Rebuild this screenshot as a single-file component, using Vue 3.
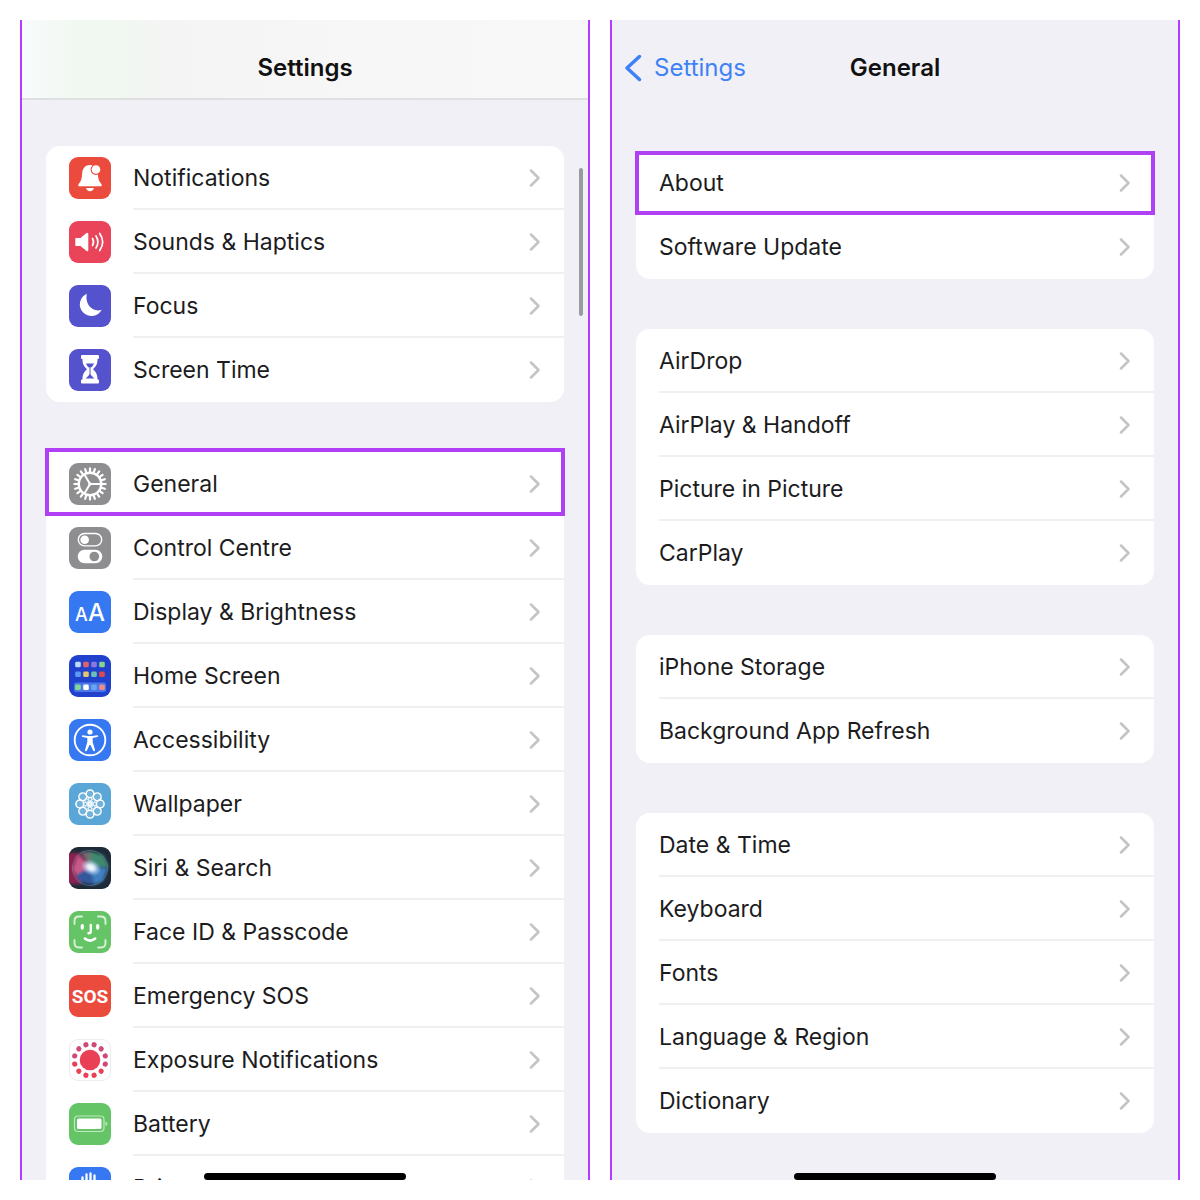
<template>
  <main class="page">
    <section class="phone">
      <header class="navbar navbar-scrolled">
        <h1 class="title">Settings</h1>
      </header>

      <div class="content">
        <nav
          v-for="(group, index) in settingsGroups"
          :key="index"
          class="card"
          :class="{ 'card-marked': group[0].marked }"
        >
          <a
            v-for="item in group"
            :key="item.name"
            href="#"
            class="row"
            :class="{ marked: item.marked }"
            @click.prevent
          >
            <svg class="icon" viewBox="0 0 42 42" aria-hidden="true">
              <rect
                v-if="item.color"
                width="42"
                height="42"
                rx="9"
                :fill="item.color"
              />

              <g v-if="item.icon === 'bell'" fill="#fff">
                <path
                  d="M21 8c-5.600 0-7.600 4.200-7.900 9-.2 4.500-.8 7-3.700 10.200V29.200h23.200v-2c-2.900-3.200-3.500-5.700-3.700-10.200-.3-4.800-2.300-9-7.900-9z"
                />
                <path d="M17 31h8c-.5 2-2 3.200-4 3.200S17.500 33 17 31z" />
                <circle cx="27" cy="12.500" r="5.400" :fill="item.color" />
                <circle cx="27" cy="12.500" r="4.300" />
              </g>

              <g v-else-if="item.icon === 'speaker'">
                <path
                  d="M7 17h4.500l6-5q1.800-1 1.800 1v16q0 2-1.800 1l-6-5H7q-.7 0-.7-.8v-6.400q0-.8.7-.8z"
                  fill="#fff"
                />
                <g
                  fill="none"
                  stroke="#fff"
                  stroke-width="1.700"
                  stroke-linecap="round"
                >
                  <path d="M23.500 17.500q2 3.500 0 7" />
                  <path d="M27 15q3.800 6 0 12" />
                  <path d="M30.700 12.500q6 8.500 0 17" />
                </g>
              </g>

              <path
                v-else-if="item.icon === 'moon'"
                d="M17.800 8.800A11.600 11.600 0 1 0 32.700 24.800C25 27.600 15.500 21 17.800 8.800z"
                fill="#fff"
              />

              <g v-else-if="item.icon === 'hourglass'">
                <path
                  d="M13 6h16q1 0 1 1v2q0 1-1 1h-.5c0 5-1.200 7.200-4.500 10.200 3.300 3 4.500 5.500 4.500 10.300h.5q1 0 1 1v2q0 1-1 1H13q-1 0-1-1v-2q0-1 1-1h.5c0-4.800 1.200-7.300 4.500-10.300-3.300-3-4.500-5.200-4.500-10.200H13q-1 0-1-1V7q0-1 1-1z"
                  fill="#fff"
                />
                <path
                  d="M17 14.500h8c-.7 2-1.800 3.200-3.300 4.300v7l3.600 3.700h-8.600l3.600-3.700v-7c-1.500-1.100-2.600-2.300-3.300-4.300z"
                  :fill="item.color"
                />
                <path d="M20.400 18h1.200v7h-1.200z" fill="#fff" fill-opacity="0.500" />
              </g>

              <g v-else-if="item.icon === 'gear'" fill="none" stroke="#fff">
                <circle cx="21" cy="21" r="11.300" stroke-width="2.400" />
                <path
                  v-for="n in 20"
                  :key="n"
                  d="M21 9V5.400"
                  stroke-width="2.200"
                  stroke-linecap="round"
                  :transform="`rotate(${n * 18} 21 21)`"
                />
                <path
                  d="M21 21h11M21 21l-5.700-9.800M21 21l-5.700 9.800"
                  stroke-width="2"
                />
                <circle cx="21" cy="21" r="1.200" fill="#fff" />
              </g>

              <g v-else-if="item.icon === 'toggles'">
                <rect
                  x="9.300"
                  y="6.500"
                  width="23.400"
                  height="12.400"
                  rx="6.200"
                  fill="none"
                  stroke="#fff"
                  stroke-width="1.400"
                />
                <circle cx="15.700" cy="12.700" r="4.300" fill="#fff" />
                <rect
                  x="8.700"
                  y="22.700"
                  width="24.600"
                  height="13.600"
                  rx="6.800"
                  fill="#fff"
                />
                <circle cx="25.300" cy="29.500" r="4.800" :fill="item.color" />
              </g>

              <g v-else-if="item.icon === 'text'" class="icon-letters">
                <text x="6" y="30" font-size="18">A</text>
                <text x="19" y="30" font-size="24">A</text>
              </g>

              <g v-else-if="item.icon === 'home'">
                <rect
                  x="5"
                  y="27.500"
                  width="32"
                  height="9.500"
                  rx="2"
                  fill="#4a78e8"
                />
                <rect
                  v-for="app in homeApps"
                  :key="`${app.x}-${app.y}`"
                  :x="app.x - 2.8"
                  :y="app.y - 2.8"
                  width="5.600"
                  height="5.600"
                  rx="1.400"
                  :fill="app.color"
                />
              </g>

              <g v-else-if="item.icon === 'person'">
                <circle
                  cx="21"
                  cy="21"
                  r="15.300"
                  fill="none"
                  stroke="#fff"
                  stroke-width="1.900"
                />
                <circle cx="21" cy="13" r="2.600" fill="#fff" />
                <path
                  d="M13.800 16.200l4.700.8h5l4.700-.8q1 0 1 .9 0 .800-1 1l-4.500.9V23l2.300 8q.2 1-.6 1.200-.9.200-1.300-.7L21.500 26h-1l-2.600 5.500q-.4.900-1.300.7-.8-.2-.6-1.200l2.300-8v-4l-4.500-.9q-1-.2-1-1 0-.9 1-.9z"
                  fill="#fff"
                />
              </g>

              <g
                v-else-if="item.icon === 'flower'"
                fill="#fff"
                fill-opacity="0.150"
                stroke="#fff"
                stroke-width="1.500"
              >
                <circle
                  v-for="n in 8"
                  :key="n"
                  cx="21"
                  cy="10.800"
                  r="3.900"
                  :transform="`rotate(${n * 45} 21 21)`"
                />
                <circle
                  v-for="n in 8"
                  :key="`inner-${n}`"
                  cx="21"
                  cy="16"
                  r="1.800"
                  stroke-width="0.800"
                  :transform="`rotate(${n * 45} 21 21)`"
                />
                <circle cx="21" cy="21" r="2.200" fill-opacity="0.800" />
              </g>

              <g v-else-if="item.icon === 'siri'">
                <defs>
                  <clipPath id="siri-clip">
                    <rect width="42" height="42" rx="9" />
                  </clipPath>
                  <filter id="siri-blur">
                    <feGaussianBlur stdDeviation="1.800" />
                  </filter>
                  <radialGradient id="siri-glow">
                    <stop offset="0" stop-color="#fff" />
                    <stop offset="0.350" stop-color="#e4f2ff" stop-opacity="0.900" />
                    <stop offset="1" stop-color="#a8c8f0" stop-opacity="0" />
                  </radialGradient>
                </defs>
                <g clip-path="url(#siri-clip)">
                  <rect width="42" height="42" fill="#1d2b38" />
                  <g filter="url(#siri-blur)">
                    <path d="M-4 6h15l10 14-9 17H-4z" fill="#8a2450" />
                    <path d="M21 20L9 8l-5 14 5 10z" fill="#c85a88" />
                    <path d="M21 20L20 4l14 4 6 12z" fill="#40896f" />
                    <path d="M21 20l18 1-5 13-9 4z" fill="#3f7fc0" />
                    <path d="M21 20l4 18-14-3-4-7z" fill="#32589c" />
                    <path d="M21 20L12 5h9z" fill="#7a6a72" />
                  </g>
                  <circle
                    cx="21"
                    cy="21"
                    r="17.500"
                    fill="none"
                    stroke="#7fa6c8"
                    stroke-opacity="0.400"
                  />
                  <ellipse
                    cx="22"
                    cy="20.500"
                    rx="11"
                    ry="8"
                    fill="url(#siri-glow)"
                    transform="rotate(25 22 20.500)"
                  />
                </g>
              </g>

              <g
                v-else-if="item.icon === 'face'"
                fill="none"
                stroke="#fff"
                stroke-linecap="round"
              >
                <path
                  d="M5.500 13V10q0-4.500 4.500-4.500h3M29 5.500h3q4.500 0 4.500 4.500v3M36.500 29v3q0 4.500-4.500 4.500h-3M13 36.500h-3q-4.500 0-4.500-4.500v-3"
                  stroke-width="1.900"
                  stroke-opacity="0.750"
                />
                <path d="M13.300 14.500v2.600M28.700 14.500v2.600" stroke-width="3.200" />
                <path d="M21.800 14v6.500q0 1.800-2.300 1.800" stroke-width="2.400" />
                <path d="M15.800 27.500q5.200 4.200 10.400 0" stroke-width="2.500" />
              </g>

              <text
                v-else-if="item.icon === 'sos'"
                x="21"
                y="28"
                class="icon-sos"
              >
                SOS
              </text>

              <g v-else-if="item.icon === 'exposure'" fill="#ea4055">
                <rect
                  x="0.500"
                  y="0.500"
                  width="41"
                  height="41"
                  rx="8.500"
                  fill="#fff"
                  stroke="#ededed"
                />
                <circle cx="21" cy="21" r="10.300" />
                <circle
                  v-for="n in 12"
                  :key="n"
                  cx="21"
                  cy="5.200"
                  r="2.600"
                  :fill="n > 9 || n < 5 ? '#cf4a78' : '#ea4055'"
                  :transform="`rotate(${n * 30 - 15} 21 21)`"
                />
              </g>

              <g v-else-if="item.icon === 'battery'">
                <rect
                  x="5.500"
                  y="13"
                  width="29.500"
                  height="15.500"
                  rx="3.500"
                  fill="none"
                  stroke="#fff"
                  stroke-opacity="0.600"
                  stroke-width="1.200"
                />
                <rect
                  x="8"
                  y="15.500"
                  width="24.500"
                  height="10.500"
                  rx="1.500"
                  fill="#fff"
                />
                <path
                  d="M36.500 18.500q2 .7 2 2.300t-2 2.300z"
                  fill="#fff"
                  fill-opacity="0.600"
                />
              </g>

              <g
                v-else-if="item.icon === 'hand'"
                fill="none"
                stroke="#fff"
                stroke-width="2.300"
                stroke-linecap="round"
              >
                <path d="M13.500 22V10.500M17.500 20V7.500M21.500 20V6.500M25.500 20V8.500" />
                <path
                  d="M12.400 20h14.300l4-2.500q2-.5 1.500 1.500L27 30q-2.500 5-7.500 5t-7-7z"
                  fill="#fff"
                  stroke-width="0"
                />
              </g>
            </svg>

            <span class="row-body">
              <span class="label">{{ item.name }}</span>
              <svg class="chevron" viewBox="0 0 12 18" aria-hidden="true">
                <path d="M2 1.500L9.500 9L2 16.500" />
              </svg>
            </span>
          </a>
        </nav>
      </div>

      <div class="scrollbar"></div>
      <div class="home-indicator"></div>
    </section>

    <section class="phone">
      <header class="navbar">
        <a href="#" class="back" @click.prevent>
          <svg class="back-icon" viewBox="0 0 18 28" aria-hidden="true">
            <path d="M15.500 2.500L3 14l12.500 11.500" />
          </svg>
          <span>Settings</span>
        </a>
        <h1 class="title">General</h1>
      </header>

      <div class="content content-general">
        <nav
          v-for="(group, index) in generalGroups"
          :key="index"
          class="card"
          :class="{ 'card-marked': group[0].marked }"
        >
          <a
            v-for="item in group"
            :key="item.name"
            href="#"
            class="row"
            :class="{ marked: item.marked }"
            @click.prevent
          >
            <span class="row-body">
              <span class="label">{{ item.name }}</span>
              <svg class="chevron" viewBox="0 0 12 18" aria-hidden="true">
                <path d="M2 1.500L9.500 9L2 16.500" />
              </svg>
            </span>
          </a>
        </nav>
      </div>

      <div class="home-indicator"></div>
    </section>
  </main>
</template>

<script setup>
const settingsGroups = [
  [
    { name: "Notifications", icon: "bell", color: "#eb4b3d" },
    { name: "Sounds & Haptics", icon: "speaker", color: "#ea445a" },
    { name: "Focus", icon: "moon", color: "#5452cc" },
    { name: "Screen Time", icon: "hourglass", color: "#5452cc" },
  ],
  [
    { name: "General", icon: "gear", color: "#8e8e90", marked: true },
    { name: "Control Centre", icon: "toggles", color: "#8e8e90" },
    { name: "Display & Brightness", icon: "text", color: "#3578f2" },
    { name: "Home Screen", icon: "home", color: "#1f41cc" },
    { name: "Accessibility", icon: "person", color: "#3578f2" },
    { name: "Wallpaper", icon: "flower", color: "#5aa6d6" },
    { name: "Siri & Search", icon: "siri" },
    { name: "Face ID & Passcode", icon: "face", color: "#65c466" },
    { name: "Emergency SOS", icon: "sos", color: "#eb4b3d" },
    { name: "Exposure Notifications", icon: "exposure" },
    { name: "Battery", icon: "battery", color: "#65c466" },
    { name: "Privacy & Security", icon: "hand", color: "#3578f2" },
  ],
];

const generalGroups = [
  [{ name: "About", marked: true }, { name: "Software Update" }],
  [
    { name: "AirDrop" },
    { name: "AirPlay & Handoff" },
    { name: "Picture in Picture" },
    { name: "CarPlay" },
  ],
  [{ name: "iPhone Storage" }, { name: "Background App Refresh" }],
  [
    { name: "Date & Time" },
    { name: "Keyboard" },
    { name: "Fonts" },
    { name: "Language & Region" },
    { name: "Dictionary" },
  ],
];

const columns = [9, 17, 25, 33];
const appRows = [
  { y: 9.5, colors: ["#b9dcff", "#e0606c", "#8a78e0", "#86d68c"] },
  { y: 19.3, colors: ["#5a9cf4", "#e8c468", "#6cc0b8", "#dc4a50"] },
  { y: 32.3, colors: ["#86d694", "#ffffff", "#6aa4f6", "#f08a84"] },
];
const homeApps = appRows.flatMap((row) =>
  row.colors.map((color, i) => ({ x: columns[i], y: row.y, color }))
);
</script>

<style>
body {
  margin: 0;
  background: #fff;
}
</style>

<style scoped>
.page {
  display: grid;
  grid-template-columns: 1fr 1fr;
  gap: 20px;
  padding: 20px;
  height: 100vh;
  box-sizing: border-box;
  font-family: Inter, "Liberation Sans", sans-serif;
  font-size: 24px;
  line-height: 32px;
  color: #1c1c1e;
}
.phone {
  position: relative;
  overflow: hidden;
  background: #f1f0f6;
  border: solid #b23cff;
  border-width: 0 2px;
}
.navbar {
  display: grid;
  grid-template-columns: 1fr auto 1fr;
  align-items: center;
  height: 80px;
  padding: 18px 12px 0;
  box-sizing: border-box;
  border-bottom: 2px solid transparent;
}
.navbar-scrolled {
  border-bottom-color: #dfdfe2;
  background: linear-gradient(
    90deg,
    #f8fbfc 0,
    #f1f8f1 10%,
    #f1f7f1 17%,
    #f4f4f4 25%,
    #f7f7f7 60%,
    #f8f8f8 100%
  );
}
.title {
  grid-column: 2;
  margin: 0;
  font-size: 24px;
  font-weight: 600;
  color: #111;
}
.back {
  display: flex;
  align-items: center;
  gap: 12px;
  color: #3f82f7;
  text-decoration: none;
}
.back-icon {
  width: 18px;
  height: 28px;
  fill: none;
  stroke: currentColor;
  stroke-width: 3.5;
  stroke-linecap: round;
  stroke-linejoin: round;
}
.content {
  display: flex;
  flex-direction: column;
  gap: 50px;
  padding: 46px 24px 0;
}
.content-general {
  padding-top: 51px;
}
.card {
  background: #fff;
  border-radius: 14px;
}
.card-marked {
  border-top-left-radius: 0;
  border-top-right-radius: 0;
}
.row {
  position: relative;
  display: flex;
  align-items: center;
  gap: 22px;
  height: 64px;
  padding-left: 23px;
  color: inherit;
  text-decoration: none;
}
.marked::after {
  content: "";
  position: absolute;
  inset: -4px -1px 0;
  border: 4px solid #b040f4;
}
.content-general .marked::after {
  inset: 0 -1px;
}
.icon {
  flex: none;
  width: 42px;
  height: 42px;
}
.icon-letters {
  fill: #fff;
  font-weight: 500;
}
.icon-sos {
  fill: #fff;
  font-family: Roboto, sans-serif;
  font-size: 19px;
  font-weight: 700;
  text-anchor: middle;
}
.row-body {
  flex: 1;
  display: flex;
  align-items: center;
  justify-content: space-between;
  height: 100%;
  padding: 2px 23px 0 0;
  box-sizing: border-box;
  border-bottom: 2px solid #f0f0f2;
}
.row:last-child .row-body {
  border-bottom-color: transparent;
}
.label {
  font-size: 23px;
  white-space: nowrap;
}
.chevron {
  width: 12px;
  height: 18px;
  fill: none;
  stroke: #c4c4c7;
  stroke-width: 2.5;
  stroke-linecap: round;
  stroke-linejoin: round;
}
.scrollbar {
  position: absolute;
  top: 148px;
  right: 5px;
  width: 4px;
  height: 148px;
  border-radius: 2px;
  background: #9a9a9d;
}
.home-indicator {
  position: absolute;
  bottom: 0;
  left: 50%;
  width: 202px;
  height: 7px;
  border-radius: 4px;
  background: #000;
  transform: translateX(-50%);
}
</style>
